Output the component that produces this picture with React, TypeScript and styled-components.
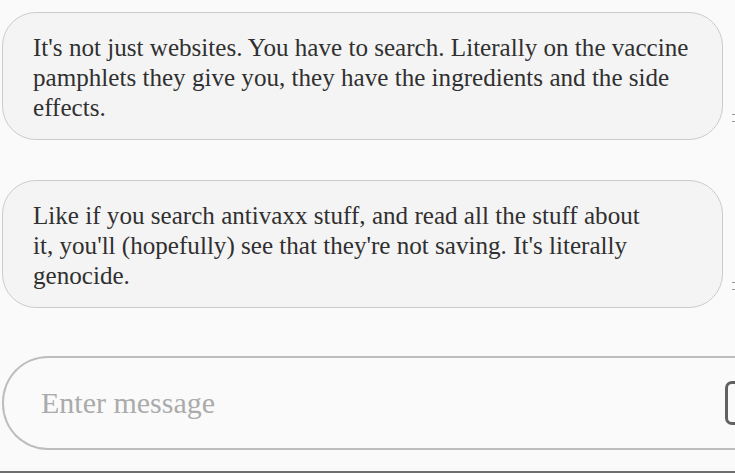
import React from "react";
import styled, { createGlobalStyle } from "styled-components";

const GlobalStyle = createGlobalStyle`
  html, body {
    margin: 0;
    padding: 0;
    background: #fafafa;
    overflow: hidden;
  }
  body {
    font-family: "Liberation Serif", "DejaVu Serif", serif;
  }
`;

const Screen = styled.div`
  width: 735px;
  height: 473px;
  display: flex;
  flex-direction: column;
  box-sizing: border-box;
  border-bottom: 2px solid #6e6e6e;
  overflow: hidden;
`;

const Thread = styled.div`
  display: flex;
  flex-direction: column;
  gap: 40px;
  padding: 12px 0 0 2px;
`;

const Row = styled.div`
  display: flex;
  align-items: flex-end;
  width: 760px;
`;

const Bubble = styled.div`
  box-sizing: border-box;
  width: 721px;
  height: 128px;
  padding: 20px 0 0 30px;
  background: #f4f4f4;
  border: 1.5px solid #cbcbcb;
  border-radius: 34px;
  color: #303030;
  font-size: 25.1px;
  line-height: 30px;
`;

const Line = styled.span`
  display: block;
  white-space: nowrap;
`;

const Meta = styled.div`
  display: flex;
  flex-direction: column;
  gap: 6px;
  margin: 0 0 18px 9px;
`;

const Dot = styled.span`
  width: 3px;
  height: 1px;
  background: #9a9a9a;
`;

const Composer = styled.div`
  margin: 48px 0 0 2px;
  box-sizing: border-box;
  width: 760px;
  height: 94px;
  display: flex;
  align-items: center;
  padding-left: 35px;
  border: 2px solid #bdbdbd;
  border-radius: 46px 0 0 46px;
  border-right: none;
  background: #fafafa;
`;

const Input = styled.input`
  flex: 1;
  border: none;
  background: transparent;
  outline: none;
  font-family: inherit;
  font-size: 30px;
  color: #333;
  &::placeholder {
    color: #ababab;
  }
`;

const Attach = styled.div`
  width: 40px;
  height: 44px;
  margin-right: -3px;
  box-sizing: border-box;
  border: 3px solid #616161;
  border-radius: 7px;
`;

const messages = [
  [
    "It's not just websites. You have to search. Literally on the vaccine",
    "pamphlets they give you, they have the ingredients and the side",
    "effects.",
  ],
  [
    "Like if you search antivaxx stuff, and read all the stuff about",
    "it, you'll (hopefully) see that they're not saving. It's literally",
    "genocide.",
  ],
];

export default function App() {
  return (
    <>
      <GlobalStyle />
      <Screen>
        <Thread>
          {messages.map((lines, i) => (
            <Row key={i}>
              <Bubble>
                {lines.map((l, j) => (
                  <Line key={j}>{l}</Line>
                ))}
              </Bubble>
              <Meta>
                <Dot />
                <Dot />
              </Meta>
            </Row>
          ))}
        </Thread>
        <Composer>
          <Input placeholder="Enter message" />
          <Attach />
        </Composer>
      </Screen>
    </>
  );
}
